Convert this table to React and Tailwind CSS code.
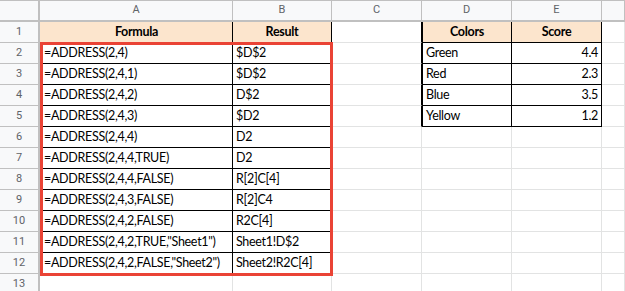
import React from "react";

const cols = ["A", "B", "C", "D", "E", ""];
const widths = "40px 193px 99px 90px 90px 90px 1fr";

const rows = [
  ["Formula", "Result", "", "Colors", "Score"],
  ["=ADDRESS(2,4)", "$D$2", "", "Green", "4.4"],
  ["=ADDRESS(2,4,1)", "$D$2", "", "Red", "2.3"],
  ["=ADDRESS(2,4,2)", "D$2", "", "Blue", "3.5"],
  ["=ADDRESS(2,4,3)", "$D2", "", "Yellow", "1.2"],
  ["=ADDRESS(2,4,4)", "D2", "", "", ""],
  ["=ADDRESS(2,4,4,TRUE)", "D2", "", "", ""],
  ["=ADDRESS(2,4,4,FALSE)", "R[2]C[4]", "", "", ""],
  ["=ADDRESS(2,4,3,FALSE)", "R[2]C4", "", "", ""],
  ["=ADDRESS(2,4,2,FALSE)", "R2C[4]", "", "", ""],
  ['=ADDRESS(2,4,2,TRUE,"Sheet1")', "Sheet1!D$2", "", "", ""],
  ['=ADDRESS(2,4,2,FALSE,"Sheet2")', "Sheet2!R2C[4]", "", "", ""],
  ["", "", "", "", ""],
];

// is cell (row index r, col index c) inside a bordered table
const inTable = (r, c) =>
  (r <= 11 && (c === 0 || c === 1)) || (r <= 4 && (c === 3 || c === 4));

const Cell = ({ r, c, value }) => {
  const table = inTable(r, c);
  const header = r === 0 && table;
  // right border is black if this cell or right neighbour is in a table
  const rightBlack = table || inTable(r, c + 1);
  const bottomBlack = table || inTable(r + 1, c);
  const numeric = c === 4 && r > 0;
  return (
    <div
      className={`h-[21px] flex items-end pb-[2px] overflow-hidden whitespace-nowrap border-r border-b text-[12.5px] leading-[16px] tracking-[-0.3px] text-black ${
        c === 0 ? "pl-[4px] pr-[3px]" : "px-[3px]"
      } ${rightBlack ? "border-r-black" : "border-r-[#e2e3e3]"} ${
        bottomBlack ? "border-b-black" : "border-b-[#e2e3e3]"
      } ${header ? "bg-[#fce5cd] font-bold justify-center" : "bg-white"} ${
        numeric ? "justify-end" : ""
      } ${c === 3 && table ? "border-l border-l-black" : ""}`}
    >
      {value}
    </div>
  );
};

export default function App() {
  return (
    <div
      className="relative w-[625px] h-[291px] overflow-hidden bg-white"
      style={{ fontFamily: "Lato, 'Liberation Sans', sans-serif" }}
    >
      <div className="grid" style={{ gridTemplateColumns: widths }}>
        {/* column header row */}
        <div className="h-[22px] bg-[#f8f9fa] border-t border-t-[#c0c0c0] border-r-[2px] border-r-[#c0c0c0] border-b-[2px] border-b-[#c0c0c0]" />
        {cols.map((c, i) => (
          <div
            key={i}
            className="h-[22px] bg-[#f8f9fa] border-t border-t-[#c0c0c0] border-r border-r-[#c0c0c0] border-b-[2px] border-b-[#c0c0c0] flex items-center justify-center text-[11px] text-[#5f6368]"
            style={{ fontFamily: "Roboto, Arial, sans-serif" }}
          >
            {c}
          </div>
        ))}

        {rows.map((row, r) => (
          <React.Fragment key={r}>
            <div
              className="h-[21px] bg-[#f8f9fa] border-r-[2px] border-r-[#c0c0c0] border-b border-b-[#c0c0c0] flex items-center justify-center text-[11px] text-[#5f6368]"
              style={{ fontFamily: "Roboto, Arial, sans-serif" }}
            >
              {r + 1}
            </div>
            {row.map((v, c) => (
              <Cell key={c} r={r} c={c} value={v} />
            ))}
            <div className="h-[21px] border-r border-b border-[#e2e3e3]" />
          </React.Fragment>
        ))}
      </div>

      {/* red outline around A2:B12 */}
      <div className="absolute left-[40px] top-[42px] w-[293px] h-[234px] border-[3px] border-[#ea4335] pointer-events-none" />
    </div>
  );
}
